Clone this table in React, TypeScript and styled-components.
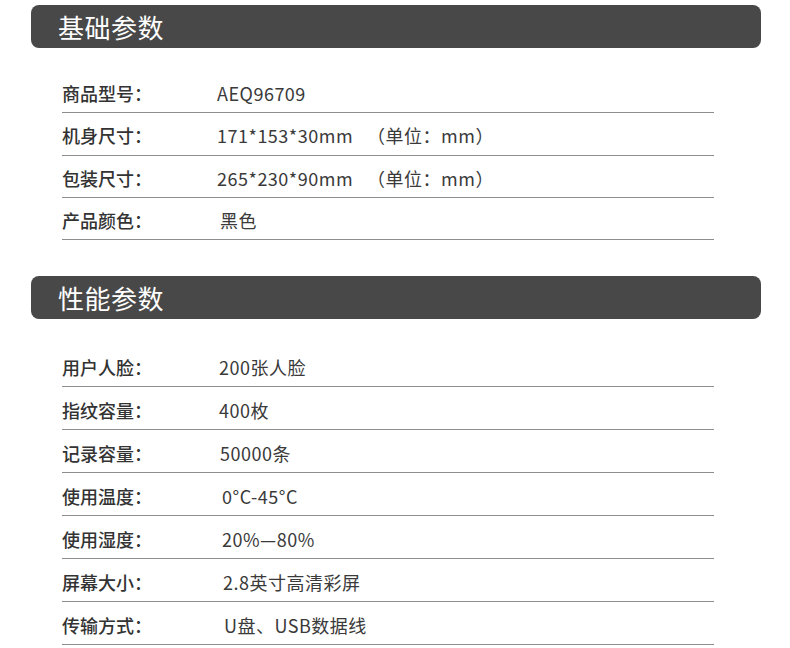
import React from "react";
import styled, { createGlobalStyle } from "styled-components";

const GlobalStyle = createGlobalStyle`
  html, body { margin: 0; padding: 0; background: #ffffff; }
  body { font-family: "Noto Sans CJK SC", "Noto Sans", sans-serif; }
`;

const Page = styled.div`
  width: 790px;
  padding-top: 5px;
  display: flex;
  flex-direction: column;
`;

const Section = styled.section<{ $gapBefore: number }>`
  display: flex;
  flex-direction: column;
  margin-top: ${(p) => p.$gapBefore}px;
`;

const Header = styled.div`
  margin: 0 29px 0 31px;
  height: 43px;
  border-radius: 8px;
  background: #484848;
  display: flex;
  align-items: center;
  padding-left: 27px;
  box-sizing: border-box;
`;

const Title = styled.h2`
  margin: 0;
  font-size: 26px;
  font-weight: 400;
  color: #ffffff;
  line-height: 1;
  letter-spacing: 0.5px;
`;

const Table = styled.div<{ $top: number }>`
  margin: ${(p) => p.$top}px 0 0 62px;
  width: 652px;
  display: flex;
  flex-direction: column;
`;

const Row = styled.div<{ $h: number }>`
  height: ${(p) => p.$h}px;
  border-bottom: 1px solid #8e8e8e;
  display: flex;
  align-items: center;
  padding-top: 3px;
  box-sizing: border-box;
  font-size: 18px;
  line-height: 1;
`;

const Label = styled.span`
  width: 155px;
  flex: none;
  color: #333333;
  font-weight: 500;
`;

const Value = styled.span<{ $shift: number }>`
  padding-left: ${(p) => p.$shift}px;
  color: #3a3a3a;
  font-weight: 400;
  letter-spacing: 0.5px;
  white-space: pre;
`;

const Note = styled.span`
  margin-left: 14px;
`;

type Item = { label: string; value: string; note?: string; shift?: number };

const basic: Item[] = [
  { label: "商品型号：", value: "AEQ96709" },
  { label: "机身尺寸：", value: "171*153*30mm", note: "（单位：mm）" },
  { label: "包装尺寸：", value: "265*230*90mm", note: "（单位：mm）" },
  { label: "产品颜色：", value: "黑色", shift: 3 },
];

const perf: Item[] = [
  { label: "用户人脸：", value: "200张人脸", shift: 2 },
  { label: "指纹容量：", value: "400枚", shift: 2 },
  { label: "记录容量：", value: "50000条", shift: 3 },
  { label: "使用温度：", value: "0°C-45°C", shift: 5 },
  { label: "使用湿度：", value: "20%—80%", shift: 5 },
  { label: "屏幕大小：", value: "2.8英寸高清彩屏", shift: 6 },
  { label: "传输方式：", value: "U盘、USB数据线", shift: 7 },
];

const SpecSection: React.FC<{
  title: string;
  items: Item[];
  gapBefore: number;
  tableTop: number;
  rowH: number;
}> = ({ title, items, gapBefore, tableTop, rowH }) => (
  <Section $gapBefore={gapBefore}>
    <Header>
      <Title>{title}</Title>
    </Header>
    <Table $top={tableTop}>
      {items.map((it) => (
        <Row key={it.label} $h={rowH}>
          <Label>{it.label}</Label>
          <Value $shift={it.shift ?? 0}>
            {it.value}
            {it.note && <Note>{it.note}</Note>}
          </Value>
        </Row>
      ))}
    </Table>
  </Section>
);

export default function App() {
  return (
    <>
      <GlobalStyle />
      <Page>
        <SpecSection title="基础参数" items={basic} gapBefore={0} tableTop={23} rowH={42.3} />
        <SpecSection title="性能参数" items={perf} gapBefore={36} tableTop={25} rowH={43} />
      </Page>
    </>
  );
}
